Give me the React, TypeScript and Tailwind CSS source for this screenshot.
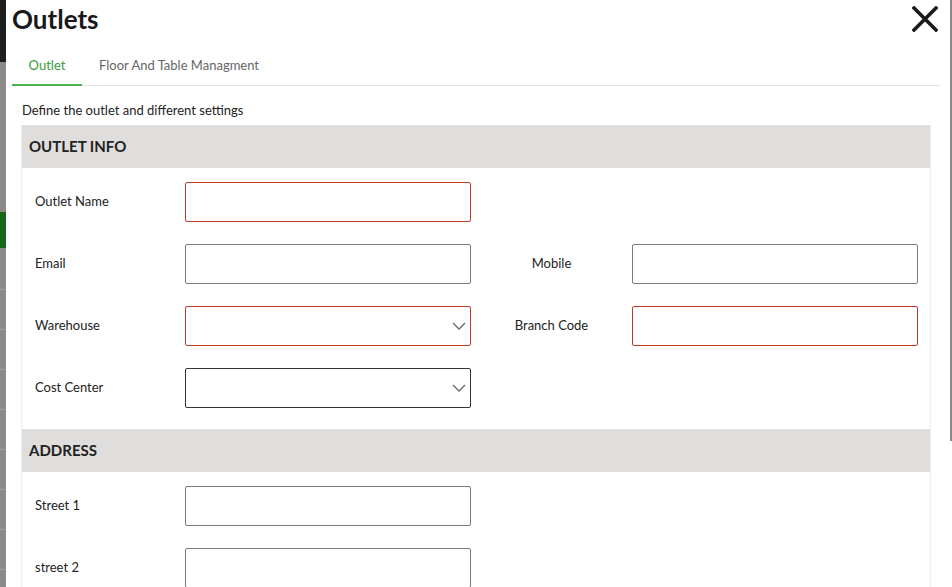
import React from 'react';

function Chevron() {
  return (
    <svg width="14" height="8" viewBox="0 0 14 8" className="absolute right-[4px] top-1/2 -translate-y-1/2">
      <path d="M1 1l6 6 6-6" fill="none" stroke="#666" strokeWidth="1.3" />
    </svg>
  );
}

interface FieldProps {
  error?: boolean;
  select?: boolean;
  dark?: boolean;
}

function Field({ error = false, select = false, dark = false }: FieldProps) {
  const border = error ? 'border-[#c53a25]' : dark ? 'border-[#333]' : 'border-[#7a7a7a]';
  return (
    <div className={`relative shrink-0 w-[286px] h-[40px] border ${border} rounded-[2px] bg-white`}>
      {select && <Chevron />}
    </div>
  );
}

function Row({ children }: { children: React.ReactNode }) {
  return <div className="flex items-center h-[40px] shrink-0">{children}</div>;
}

function Label({ text }: { text: string }) {
  return <div className="w-[163px] shrink-0 pl-[13px] text-[13px] text-[#222]">{text}</div>;
}

function RightLabel({ text }: { text: string }) {
  return <div className="w-[161px] shrink-0 text-center text-[13px] text-[#222]">{text}</div>;
}

function SectionHeader({ title }: { title: string }) {
  return (
    <div className="h-[43px] shrink-0 bg-[#e0dedc] flex items-center pl-[7px] text-[15px] font-bold text-[#222]">
      {title}
    </div>
  );
}

export default function App() {
  return (
    <div className="flex w-full h-[587px] overflow-hidden bg-white" style={{ fontFamily: 'Lato, "Open Sans", sans-serif' }}>
      <div className="w-[6px] flex flex-col shrink-0">
        <div className="h-[62px] shrink-0 bg-[#1e1e1e]" />
        <div className="h-[150px] shrink-0 bg-[#8b8b8b]" />
        <div className="h-[36px] shrink-0 bg-[#17661a]" />
        <div className="flex-1 bg-[#8b8b8b] flex flex-col">
          <div className="h-[42px] shrink-0 border-b border-[#9e9e9e]" />
          <div className="h-[40px] shrink-0 border-b border-[#9e9e9e]" />
          <div className="h-[40px] shrink-0 border-b border-[#9e9e9e]" />
          <div className="h-[40px] shrink-0 border-b border-[#9e9e9e]" />
          <div className="h-[40px] shrink-0 border-b border-[#9e9e9e]" />
          <div className="h-[40px] shrink-0 border-b border-[#9e9e9e]" />
          <div className="h-[40px] shrink-0 border-b border-[#9e9e9e]" />
          <div className="h-[40px] shrink-0 border-b border-[#9e9e9e]" />
        </div>
      </div>

      <div className="flex-1 flex flex-col pl-[6px] min-h-0">
        <div className="flex items-start justify-between h-[46px] shrink-0 pr-[10px]">
          <h1 className="text-[26px] font-bold text-[#1a1a1a] leading-[38px]">Outlets</h1>
          <svg width="26" height="26" viewBox="0 0 26 26" className="mt-[6px]">
            <path d="M2 2L24 24M24 2L2 24" stroke="#1a1a1a" strokeWidth="3.6" strokeLinecap="square" />
          </svg>
        </div>

        <div className="flex items-end h-[40px] shrink-0 border-b border-[#e2e2e2] mr-[8px] text-[13px]">
          <div className="w-[70px] h-full flex items-center justify-center text-[#3c9a3c] border-b-2 border-[#4caf50] -mb-px pt-[1px]">
            Outlet
          </div>
          <div className="h-full flex items-center pl-[17px] text-[#666] pt-[1px]">Floor And Table Managment</div>
        </div>

        <div className="pl-[9px] pr-[11px] pt-[15px] shrink-0">
          <div className="text-[13px] text-[#222] mb-[4px] ml-[1px]">Define the outlet and different settings</div>
          <div className="border-x border-[#eeeeee] mr-[6px]">
            <SectionHeader title="OUTLET INFO" />
            <div className="flex flex-col gap-[22px] pt-[14px] pb-[21px]">
              <Row>
                <Label text="Outlet Name" />
                <Field error />
              </Row>
              <Row>
                <Label text="Email" />
                <Field />
                <RightLabel text="Mobile" />
                <Field />
              </Row>
              <Row>
                <Label text="Warehouse" />
                <Field error select />
                <RightLabel text="Branch Code" />
                <Field error />
              </Row>
              <Row>
                <Label text="Cost Center" />
                <Field select dark />
              </Row>
            </div>
            <SectionHeader title="ADDRESS" />
            <div className="flex flex-col gap-[22px] pt-[14px] pb-[23px]">
              <Row>
                <Label text="Street 1" />
                <Field />
              </Row>
              <Row>
                <Label text="street 2" />
                <Field />
              </Row>
            </div>
          </div>
        </div>
      </div>

      <div className="w-[4px] shrink-0 flex justify-end">
        <div className="w-[2px] h-[441px] bg-[#8a8a8a]" />
      </div>
    </div>
  );
}
